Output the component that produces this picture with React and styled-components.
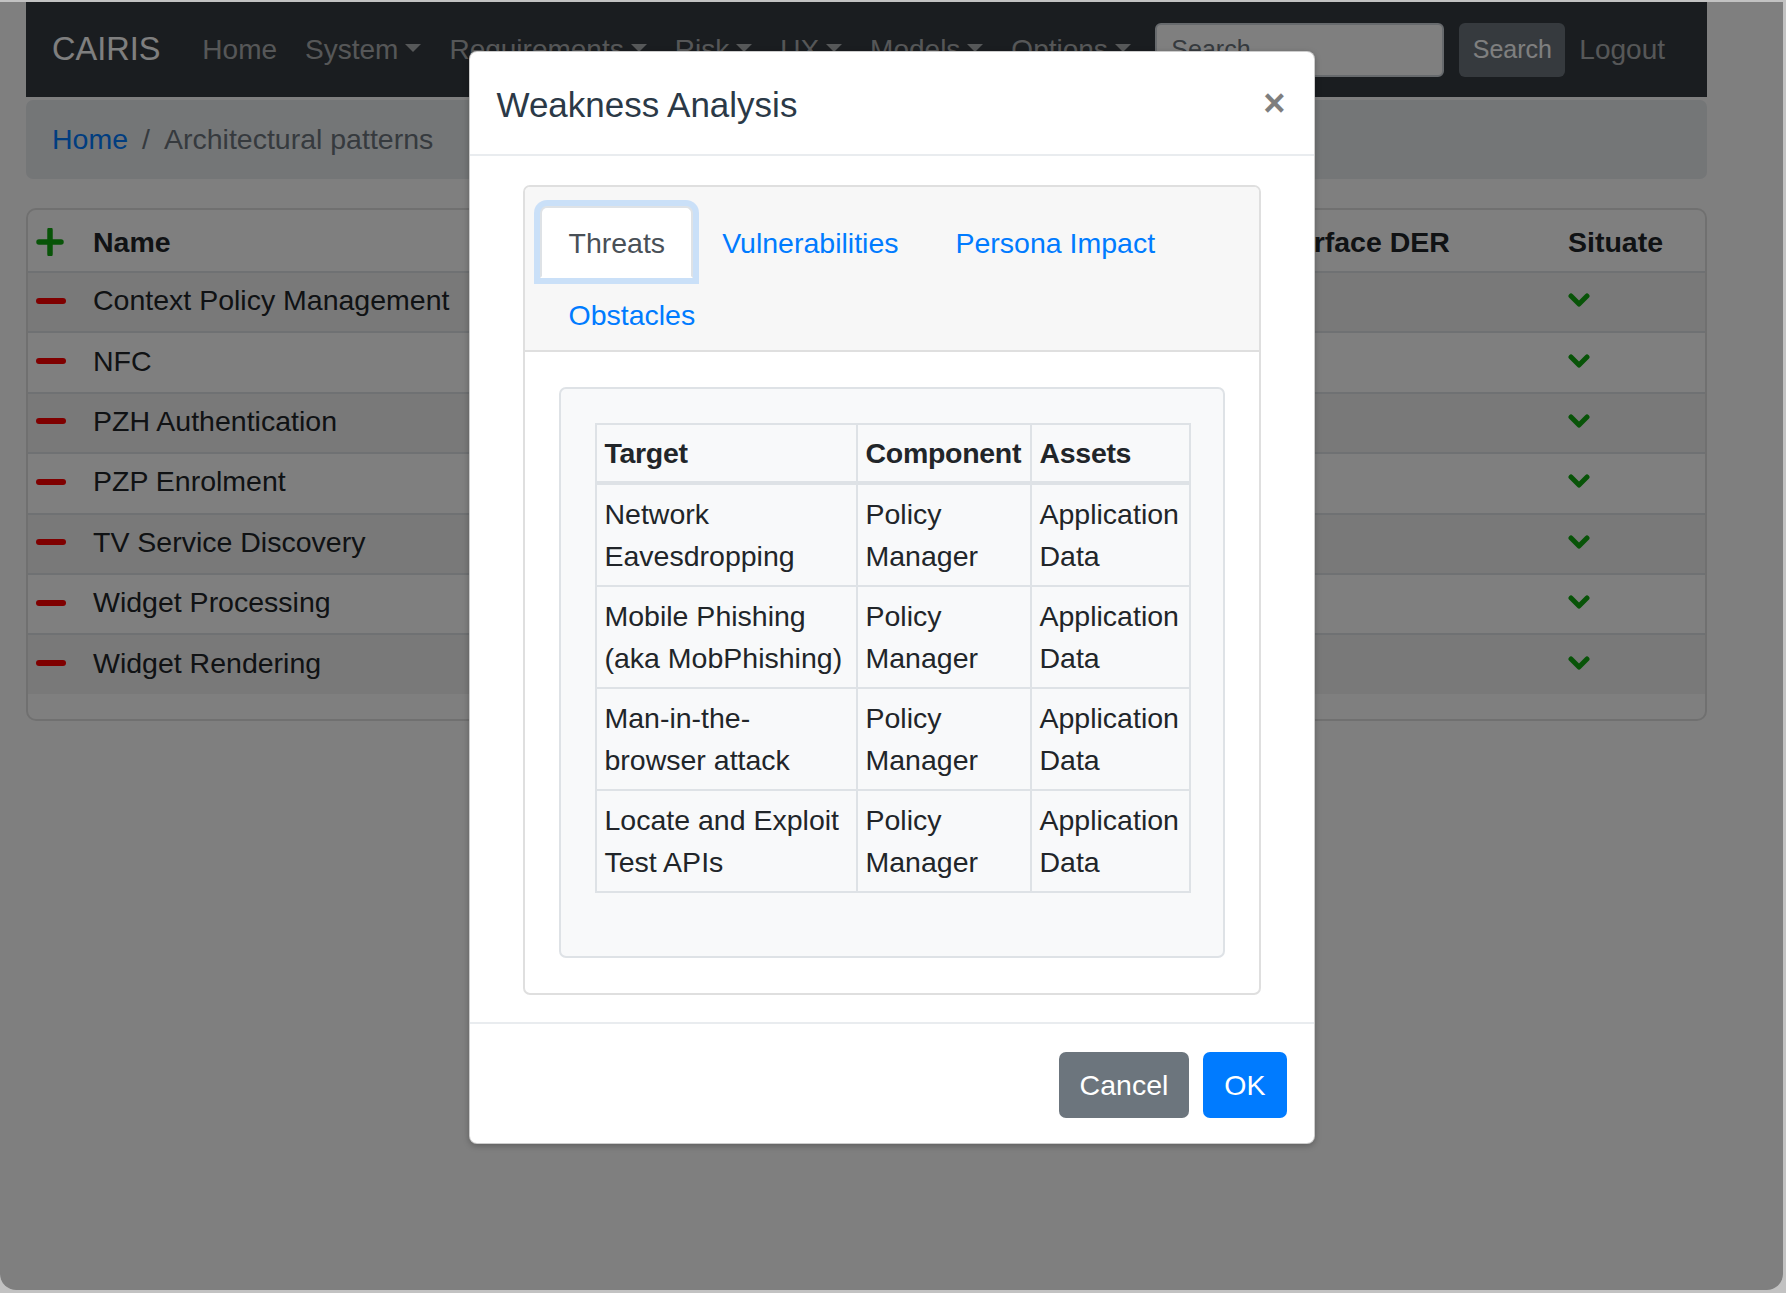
import React from "react";
import styled, { createGlobalStyle, css } from "styled-components";

const GlobalStyle = createGlobalStyle`
  html, body {
    margin: 0;
    padding: 0;
  }
  body {
    background: #c2c2c2;
    font-family: "Liberation Sans", Arial, sans-serif;
    color: #212529;
  }
  * {
    box-sizing: border-box;
  }
`;

const Window = styled.div`
  position: relative;
  margin: 2px 3px 0 0;
  height: 1288px;
  background: #fff;
  border-radius: 0 0 16px 16px;
  overflow: hidden;
`;

const Page = styled.div`
  width: 1681px;
  margin-left: 26px;
`;

const Navbar = styled.nav`
  display: flex;
  align-items: center;
  height: 95px;
  padding: 0 28px 0 26px;
  background: #343a40;
`;

const Brand = styled.a`
  font-size: 32.5px;
  color: #fff;
  margin-right: 28px;
`;

const NavLink = styled.a`
  font-size: 28px;
  color: rgba(255, 255, 255, 0.6);
  padding: 0 14px;
  white-space: nowrap;
  ${(p) =>
    p.$dropdown &&
    css`
      &::after {
        content: "";
        display: inline-block;
        margin-left: 7px;
        vertical-align: 7px;
        border-top: 8.5px solid;
        border-left: 8.5px solid transparent;
        border-right: 8.5px solid transparent;
      }
    `}
`;

const SearchForm = styled.form`
  display: flex;
  align-items: center;
  margin-left: auto;
`;

const SearchInput = styled.input`
  width: 289px;
  height: 54px;
  margin-right: 15px;
  padding: 0 14px;
  font-family: inherit;
  font-size: 25px;
  color: #495057;
  background: #fff;
  border: 2px solid #ced4da;
  border-radius: 6px;
  &::placeholder {
    color: #6c757d;
  }
`;

const SearchButton = styled.button`
  width: 106px;
  height: 54px;
  font-family: inherit;
  font-size: 25px;
  color: #fff;
  background: #6c757d;
  border: 0;
  border-radius: 6px;
`;

const Breadcrumb = styled.ol`
  display: flex;
  align-items: center;
  height: 79px;
  margin: 3px 0 0;
  padding: 0 26px;
  list-style: none;
  background: #e9ecef;
  border-radius: 7px;
  font-size: 28.5px;
`;

const Crumb = styled.li`
  color: ${(p) => (p.$link ? "#007bff" : "#6c757d")};
  &:not(:first-child)::before {
    content: "/";
    padding: 0 14px;
    color: #6c757d;
  }
`;

const TablePanel = styled.div`
  margin-top: 29px;
  padding-bottom: 25px;
  border: 2px solid rgba(0, 0, 0, 0.12);
  border-radius: 10px;
  overflow: hidden;
`;

const GridRow = styled.div`
  display: grid;
  grid-template-columns: 55px 1170px 305px 1fr;
  align-items: center;
  height: ${(p) => (p.$head ? "61px" : "60.4px")};
  padding: ${(p) => (p.$head ? "3px 0 0" : "0 0 3px")};
  border-top: ${(p) => (p.$head ? "none" : "2px solid #dee2e6")};
  background: ${(p) => (p.$striped ? "rgba(0, 0, 0, 0.05)" : "transparent")};
  font-size: 28.5px;
  font-weight: ${(p) => (p.$head ? 700 : 400)};
`;

const GridCell = styled.div`
  display: flex;
  align-items: center;
  padding-left: ${(p) => (p.$icon ? "8px" : "10px")};
  white-space: nowrap;
  overflow: hidden;
`;

const PlusIcon = () => (
  <svg width="28" height="28" viewBox="0 0 28 28">
    <path d="M14 2 V26 M3 14 H25" stroke="#10a810" strokeWidth="5.5" strokeLinecap="round" />
  </svg>
);

const MinusIcon = () => (
  <svg width="30" height="8" viewBox="0 0 30 8">
    <path d="M3 4 H27" stroke="#f00" strokeWidth="6" strokeLinecap="round" />
  </svg>
);

const ChevronIcon = () => (
  <svg width="22" height="15" viewBox="0 0 22 15">
    <path d="M3 3 L11 11 L19 3" fill="none" stroke="#10a810" strokeWidth="5" strokeLinecap="round" strokeLinejoin="round" />
  </svg>
);

const Backdrop = styled.div`
  position: absolute;
  inset: 0;
  background: rgba(0, 0, 0, 0.5);
`;

const ModalLayer = styled.div`
  position: absolute;
  inset: 0;
  display: flex;
  justify-content: center;
  align-items: flex-start;
  padding-top: 49px;
`;

const Modal = styled.div`
  width: 846px;
  background: #fff;
  border: 1px solid rgba(0, 0, 0, 0.2);
  border-radius: 8px;
  box-shadow: 0 2px 6px rgba(0, 0, 0, 0.25);
`;

const ModalHeader = styled.div`
  display: flex;
  align-items: center;
  justify-content: space-between;
  height: 104px;
  padding: 0 28px 0 27px;
  border-bottom: 2px solid #e9ecef;
`;

const ModalTitle = styled.h5`
  margin: 0;
  padding-top: 3px;
  font-size: 35px;
  font-weight: 500;
  color: #2b3947;
`;

const CloseButton = styled.button`
  padding: 0;
  border: 0;
  background: none;
  font-family: inherit;
  font-size: 38px;
  font-weight: 700;
  line-height: 1;
  color: #000;
  opacity: 0.5;
`;

const ModalBody = styled.div`
  padding: 29px 53px 27px;
`;

const Card = styled.div`
  border: 2px solid #dfdfdf;
  border-radius: 7px;
  overflow: hidden;
`;

const CardHeader = styled.div`
  padding: 19px 15px 0;
  background: #f7f7f7;
  border-bottom: 2px solid #dfdfdf;
`;

const Tabs = styled.ul`
  display: flex;
  flex-wrap: wrap;
  margin: 0;
  padding: 0;
  list-style: none;
`;

const Tab = styled.li`
  height: 72px;
  padding: 3px 26px 0 27px;
  line-height: 65px;
  font-size: 28.5px;
  color: ${(p) => (p.$active ? "#495057" : "#007bff")};
  border: 2px solid transparent;
  border-radius: 7px 7px 0 0;
  ${(p) =>
    p.$active &&
    css`
      background: #fff;
      border-color: #dee2e6 #dee2e6 #fff;
      box-shadow: 0 0 0 6px rgba(0, 123, 255, 0.18);
    `}
`;

const CardBody = styled.div`
  padding: 35px 34px;
`;

const InnerPanel = styled.div`
  padding: 34px 34px 63px;
  background: #f8f9fa;
  border: 2px solid #dee2e6;
  border-radius: 7px;
`;

const DataTable = styled.table`
  width: 100%;
  border-collapse: collapse;
  table-layout: fixed;
  font-size: 28.5px;
  line-height: 42px;
  color: #212529;
`;

const Col = styled.col`
  width: ${(p) => p.$w}px;
`;

const Th = styled.th`
  padding: 7px 8px;
  text-align: left;
  font-weight: 700;
  white-space: nowrap;
  letter-spacing: -0.3px;
  border: 2px solid #dee2e6;
  border-bottom-width: 4px;
`;

const Td = styled.td`
  padding: 8px;
  vertical-align: top;
  border: 2px solid #dee2e6;
`;

const ModalFooter = styled.div`
  display: flex;
  justify-content: flex-end;
  gap: 14px;
  padding: 28px 27px 25px;
  border-top: 2px solid #e9ecef;
`;

const Button = styled.button`
  height: 66px;
  padding: 0 21px;
  font-family: inherit;
  font-size: 28.5px;
  color: #fff;
  background: ${(p) => (p.$primary ? "#007bff" : "#6c757d")};
  border: 0;
  border-radius: 7px;
`;

const navItems = [
  { label: "Home" },
  { label: "System", dropdown: true },
  { label: "Requirements", dropdown: true },
  { label: "Risk", dropdown: true },
  { label: "UX", dropdown: true },
  { label: "Models", dropdown: true },
  { label: "Options", dropdown: true },
];

const patterns = [
  "Context Policy Management",
  "NFC",
  "PZH Authentication",
  "PZP Enrolment",
  "TV Service Discovery",
  "Widget Processing",
  "Widget Rendering",
];

const threats = [
  { target: "Network Eavesdropping", component: "Policy Manager", assets: "Application Data" },
  { target: "Mobile Phishing (aka MobPhishing)", component: "Policy Manager", assets: "Application Data" },
  { target: "Man-in-the-browser attack", component: "Policy Manager", assets: "Application Data" },
  { target: "Locate and Exploit Test APIs", component: "Policy Manager", assets: "Application Data" },
];

const tabs = ["Threats", "Vulnerabilities", "Persona Impact", "Obstacles"];

export default function App() {
  return (
    <>
      <GlobalStyle />
      <Window>
        <Page>
          <Navbar>
            <Brand>CAIRIS</Brand>
            {navItems.map((item) => (
              <NavLink key={item.label} $dropdown={item.dropdown}>
                {item.label}
              </NavLink>
            ))}
            <SearchForm>
              <SearchInput placeholder="Search" />
              <SearchButton type="button">Search</SearchButton>
              <NavLink>Logout</NavLink>
            </SearchForm>
          </Navbar>

          <Breadcrumb>
            <Crumb $link>Home</Crumb>
            <Crumb>Architectural patterns</Crumb>
          </Breadcrumb>

          <TablePanel>
            <GridRow $head>
              <GridCell $icon>
                <PlusIcon />
              </GridCell>
              <GridCell>Name</GridCell>
              <GridCell>Interface DER</GridCell>
              <GridCell>Situate</GridCell>
            </GridRow>
            {patterns.map((name, i) => (
              <GridRow key={name} $striped={i % 2 === 0}>
                <GridCell $icon>
                  <MinusIcon />
                </GridCell>
                <GridCell>{name}</GridCell>
                <GridCell />
                <GridCell>
                  <ChevronIcon />
                </GridCell>
              </GridRow>
            ))}
          </TablePanel>
        </Page>

        <Backdrop />

        <ModalLayer>
          <Modal>
            <ModalHeader>
              <ModalTitle>Weakness Analysis</ModalTitle>
              <CloseButton type="button">×</CloseButton>
            </ModalHeader>
            <ModalBody>
              <Card>
                <CardHeader>
                  <Tabs>
                    {tabs.map((t, i) => (
                      <Tab key={t} $active={i === 0}>
                        {t}
                      </Tab>
                    ))}
                  </Tabs>
                </CardHeader>
                <CardBody>
                  <InnerPanel>
                    <DataTable>
                      <colgroup>
                        <Col $w={261} />
                        <Col $w={174} />
                        <Col $w={159} />
                      </colgroup>
                      <thead>
                        <tr>
                          <Th>Target</Th>
                          <Th>Component</Th>
                          <Th>Assets</Th>
                        </tr>
                      </thead>
                      <tbody>
                        {threats.map((row) => (
                          <tr key={row.target}>
                            <Td>{row.target}</Td>
                            <Td>{row.component}</Td>
                            <Td>{row.assets}</Td>
                          </tr>
                        ))}
                      </tbody>
                    </DataTable>
                  </InnerPanel>
                </CardBody>
              </Card>
            </ModalBody>
            <ModalFooter>
              <Button type="button">Cancel</Button>
              <Button type="button" $primary>
                OK
              </Button>
            </ModalFooter>
          </Modal>
        </ModalLayer>
      </Window>
    </>
  );
}
